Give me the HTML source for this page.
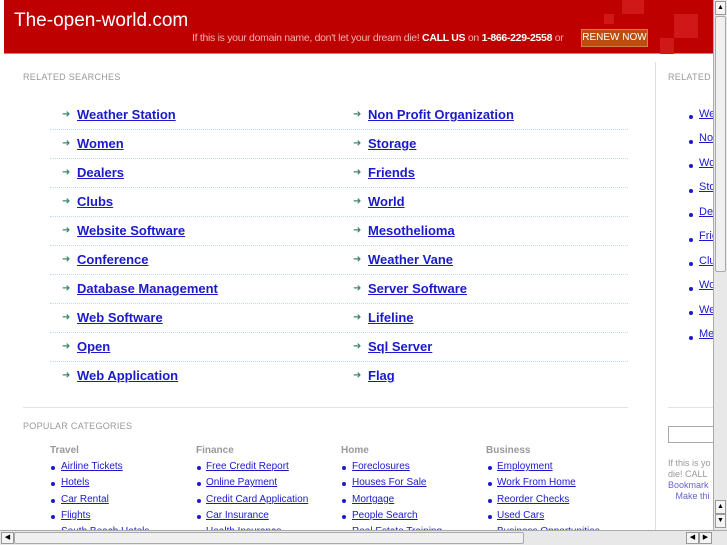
<!DOCTYPE html>
<html><head><style>
*{margin:0;padding:0;box-sizing:border-box}
body{width:727px;height:545px;overflow:hidden;background:#fff;font-family:"Liberation Sans",sans-serif;position:relative}
.hdr{position:absolute;left:4px;top:0;width:709px;height:54px;background:#bf0000;border-bottom:1px solid #9090c0}
.sq{position:absolute;background:#d01818}
.logo{position:absolute;left:10px;top:10px;color:#fff;font-size:19px}
.msg{position:absolute;left:188px;top:32px;color:#f2b0b0;font-size:10.5px;letter-spacing:-0.3px;white-space:nowrap}
.msg b{color:#fff}
.btn{position:absolute;left:577px;top:29px;width:67px;height:18px;background:#b94e10;border:1px solid #d88040;color:#fff;font-size:10px;text-align:center;line-height:16px}
.a{position:absolute;font-size:13px;font-weight:bold;color:#1a1acc;text-decoration:underline;white-space:nowrap}
.ar{position:absolute;color:#3a8a6a;font-size:10px}
.sep{position:absolute;left:50px;width:578px;border-top:1px dotted #c8d4e8}
.lbl{position:absolute;font-size:9px;color:#999;letter-spacing:.3px}
.s{position:absolute;font-size:10px;color:#1a1acc;text-decoration:underline;white-space:nowrap}
.d{position:absolute;width:4px;height:4px;border-radius:2px;background:#1a1acc}
.ch{position:absolute;font-size:10px;font-weight:bold;color:#999}
.vs{position:absolute;left:713px;top:0;width:14px;height:530px;background:#e8e8e8;border-left:1px solid #aaa}
.hs{position:absolute;left:0;top:530px;width:727px;height:15px;background:#e8e8e8;border-top:1px solid #aaa}
</style></head><body>
<div class="hdr">
<div class="sq" style="left:618px;top:0;width:22px;height:14px"></div>
<div class="sq" style="left:670px;top:14px;width:24px;height:24px"></div>
<div class="sq" style="left:656px;top:38px;width:14px;height:16px"></div>
<div class="sq" style="left:600px;top:14px;width:10px;height:10px"></div>
<div class="logo">The-open-world.com</div>
<div class="msg">If this is your domain name, don't let your dream die! <b>CALL US</b> on <b>1-866-229-2558</b> or</div>
<div class="btn">RENEW NOW</div>
</div>
<div class="lbl" style="left:23px;top:72px">RELATED SEARCHES</div>
<div style="position:absolute;left:655px;top:62px;height:468px;border-left:1px solid #d8e0f0"></div>
<div class="lbl" style="left:668px;top:72px">RELATED</div>

<div class="ar" style="left:62px;top:109px">➜</div><a class="a" style="left:77px;top:107px">Weather Station</a>
<div class="ar" style="left:353px;top:109px">➜</div><a class="a" style="left:368px;top:107px">Non Profit Organization</a>
<div class="sep" style="top:129px"></div>
<div class="ar" style="left:62px;top:138px">➜</div><a class="a" style="left:77px;top:136px">Women</a>
<div class="ar" style="left:353px;top:138px">➜</div><a class="a" style="left:368px;top:136px">Storage</a>
<div class="sep" style="top:158px"></div>
<div class="ar" style="left:62px;top:167px">➜</div><a class="a" style="left:77px;top:165px">Dealers</a>
<div class="ar" style="left:353px;top:167px">➜</div><a class="a" style="left:368px;top:165px">Friends</a>
<div class="sep" style="top:187px"></div>
<div class="ar" style="left:62px;top:196px">➜</div><a class="a" style="left:77px;top:194px">Clubs</a>
<div class="ar" style="left:353px;top:196px">➜</div><a class="a" style="left:368px;top:194px">World</a>
<div class="sep" style="top:216px"></div>
<div class="ar" style="left:62px;top:225px">➜</div><a class="a" style="left:77px;top:223px">Website Software</a>
<div class="ar" style="left:353px;top:225px">➜</div><a class="a" style="left:368px;top:223px">Mesothelioma</a>
<div class="sep" style="top:245px"></div>
<div class="ar" style="left:62px;top:254px">➜</div><a class="a" style="left:77px;top:252px">Conference</a>
<div class="ar" style="left:353px;top:254px">➜</div><a class="a" style="left:368px;top:252px">Weather Vane</a>
<div class="sep" style="top:274px"></div>
<div class="ar" style="left:62px;top:283px">➜</div><a class="a" style="left:77px;top:281px">Database Management</a>
<div class="ar" style="left:353px;top:283px">➜</div><a class="a" style="left:368px;top:281px">Server Software</a>
<div class="sep" style="top:303px"></div>
<div class="ar" style="left:62px;top:312px">➜</div><a class="a" style="left:77px;top:310px">Web Software</a>
<div class="ar" style="left:353px;top:312px">➜</div><a class="a" style="left:368px;top:310px">Lifeline</a>
<div class="sep" style="top:332px"></div>
<div class="ar" style="left:62px;top:341px">➜</div><a class="a" style="left:77px;top:339px">Open</a>
<div class="ar" style="left:353px;top:341px">➜</div><a class="a" style="left:368px;top:339px">Sql Server</a>
<div class="sep" style="top:361px"></div>
<div class="ar" style="left:62px;top:370px">➜</div><a class="a" style="left:77px;top:368px">Web Application</a>
<div class="ar" style="left:353px;top:370px">➜</div><a class="a" style="left:368px;top:368px">Flag</a>
<div style="position:absolute;left:23px;top:407px;width:605px;border-top:1px solid #dde6f0"></div>
<div style="position:absolute;left:668px;top:407px;width:45px;border-top:1px solid #dde6f0"></div>

<div class="d" style="left:689px;top:115px"></div><a class="s" style="left:699px;top:108px;font-size:11px">Weather</a>
<div class="d" style="left:689px;top:140px"></div><a class="s" style="left:699px;top:132px;font-size:11px">Non</a>
<div class="d" style="left:689px;top:164px"></div><a class="s" style="left:699px;top:157px;font-size:11px">Women</a>
<div class="d" style="left:689px;top:189px"></div><a class="s" style="left:699px;top:181px;font-size:11px">Storage</a>
<div class="d" style="left:689px;top:213px"></div><a class="s" style="left:699px;top:206px;font-size:11px">Dealers</a>
<div class="d" style="left:689px;top:238px"></div><a class="s" style="left:699px;top:230px;font-size:11px">Friends</a>
<div class="d" style="left:689px;top:262px"></div><a class="s" style="left:699px;top:255px;font-size:11px">Clubs</a>
<div class="d" style="left:689px;top:287px"></div><a class="s" style="left:699px;top:279px;font-size:11px">World</a>
<div class="d" style="left:689px;top:311px"></div><a class="s" style="left:699px;top:304px;font-size:11px">Website</a>
<div class="d" style="left:689px;top:336px"></div><a class="s" style="left:699px;top:328px;font-size:11px">Meso</a>
<div style="position:absolute;left:668px;top:426px;width:50px;height:17px;border:1px solid #aaa"></div>
<div style="position:absolute;left:668px;top:458px;font-size:9px;color:#999;line-height:11px;white-space:nowrap">If this is yo<br>die! CALL<br><span style="color:#6666cc">Bookmark</span><br>&nbsp;&nbsp;&nbsp;<span style="color:#6666cc">Make thi</span></div>

<div class="lbl" style="left:23px;top:421px">POPULAR CATEGORIES</div>
<div class="ch" style="left:50px;top:445px">Travel</div>
<div class="ch" style="left:196px;top:445px">Finance</div>
<div class="ch" style="left:341px;top:445px">Home</div>
<div class="ch" style="left:486px;top:445px">Business</div>

<div class="d" style="left:51px;top:466px"></div><a class="s" style="left:61px;top:461px">Airline Tickets</a>
<div class="d" style="left:51px;top:482px"></div><a class="s" style="left:61px;top:477px">Hotels</a>
<div class="d" style="left:51px;top:499px"></div><a class="s" style="left:61px;top:494px">Car Rental</a>
<div class="d" style="left:51px;top:515px"></div><a class="s" style="left:61px;top:510px">Flights</a>
<a class="s" style="left:61px;top:526px">South Beach Hotels</a>
<div class="d" style="left:197px;top:466px"></div><a class="s" style="left:206px;top:461px">Free Credit Report</a>
<div class="d" style="left:197px;top:482px"></div><a class="s" style="left:206px;top:477px">Online Payment</a>
<div class="d" style="left:197px;top:499px"></div><a class="s" style="left:206px;top:494px">Credit Card Application</a>
<div class="d" style="left:197px;top:515px"></div><a class="s" style="left:206px;top:510px">Car Insurance</a>
<a class="s" style="left:206px;top:526px">Health Insurance</a>
<div class="d" style="left:342px;top:466px"></div><a class="s" style="left:352px;top:461px">Foreclosures</a>
<div class="d" style="left:342px;top:482px"></div><a class="s" style="left:352px;top:477px">Houses For Sale</a>
<div class="d" style="left:342px;top:499px"></div><a class="s" style="left:352px;top:494px">Mortgage</a>
<div class="d" style="left:342px;top:515px"></div><a class="s" style="left:352px;top:510px">People Search</a>
<a class="s" style="left:352px;top:526px">Real Estate Training</a>
<div class="d" style="left:488px;top:466px"></div><a class="s" style="left:497px;top:461px">Employment</a>
<div class="d" style="left:488px;top:482px"></div><a class="s" style="left:497px;top:477px">Work From Home</a>
<div class="d" style="left:488px;top:499px"></div><a class="s" style="left:497px;top:494px">Reorder Checks</a>
<div class="d" style="left:488px;top:515px"></div><a class="s" style="left:497px;top:510px">Used Cars</a>
<a class="s" style="left:497px;top:526px">Business Opportunities</a>

<div class="vs">
<div style="position:absolute;left:1px;top:1px;width:11px;height:14px;border:1px solid #999;background:#f4f4f4;font-size:7px;text-align:center;line-height:12px">▲</div>
<div style="position:absolute;left:1px;top:16px;width:11px;height:256px;border:1px solid #aaa;background:#f0f0f0;border-radius:2px"></div>
<div style="position:absolute;left:1px;top:500px;width:11px;height:14px;border:1px solid #999;background:#f4f4f4;font-size:7px;text-align:center;line-height:12px">▲</div>
<div style="position:absolute;left:1px;top:514px;width:11px;height:14px;border:1px solid #999;background:#f4f4f4;font-size:7px;text-align:center;line-height:12px">▼</div>
</div>
<div class="hs">
<div style="position:absolute;left:1px;top:1px;width:13px;height:12px;border:1px solid #999;background:#f4f4f4;font-size:7px;text-align:center;line-height:10px">◀</div>
<div style="position:absolute;left:14px;top:1px;width:510px;height:12px;border:1px solid #aaa;background:#f0f0f0;border-radius:2px"></div>
<div style="position:absolute;left:686px;top:1px;width:13px;height:12px;border:1px solid #999;background:#f4f4f4;font-size:7px;text-align:center;line-height:10px">◀</div>
<div style="position:absolute;left:699px;top:1px;width:13px;height:12px;border:1px solid #999;background:#f4f4f4;font-size:7px;text-align:center;line-height:10px">▶</div>
</div>
</body></html>
